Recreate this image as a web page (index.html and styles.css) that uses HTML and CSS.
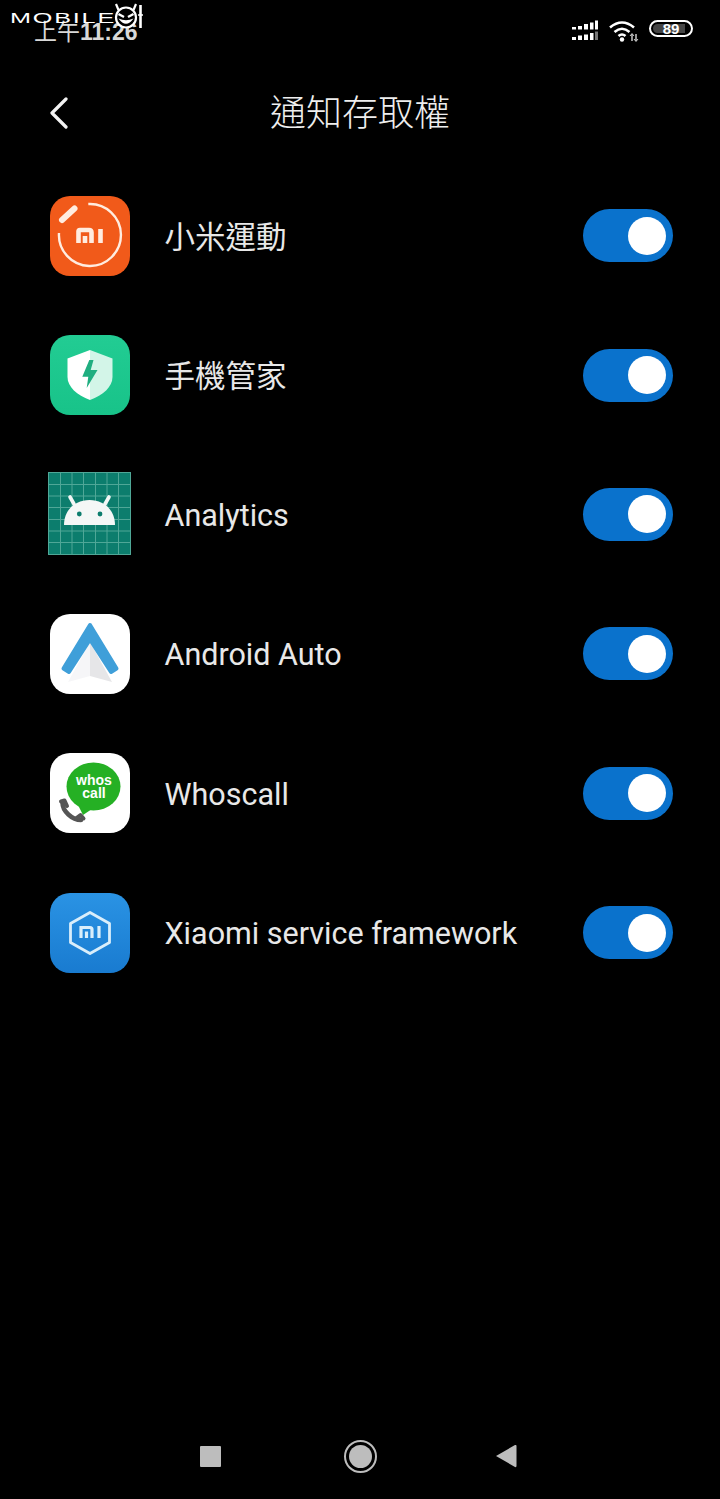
FILE: index.html
```html
<!DOCTYPE html>
<html lang="zh-Hant">

<head>
    <meta charset="UTF-8">
    <meta name="viewport" content="width=device-width, initial-scale=1.0">
    <title>通知存取權</title>
    <link rel="stylesheet" href="styles.css">
</head>

<body>

    <!-- Watermark over the status bar -->
    <div class="watermark">
        <span class="watermark-text">MOBILE</span>
        <svg class="watermark-logo" width="34" height="30" viewBox="0 0 34 30">
            <circle cx="13" cy="14.500" r="10" fill="#000" stroke="#fff" stroke-width="2.200"/>
            <path d="M5.500 7 L3 1 M20.500 7 L23 1" stroke="#fff" stroke-width="2.200" fill="none"/>
            <path d="M5.500 11 L11 14 M20.500 11 L15 14" stroke="#fff" stroke-width="2.400" fill="none"/>
            <path d="M5.500 15.500 Q13 26 20.500 15.500 Q13 19 5.500 15.500 Z" fill="#fff"/>
            <path d="M27.500 2 V25" stroke="#fff" stroke-width="2.600" fill="none"/>
            <path d="M25 12 H30" stroke="#fff" stroke-width="1.500" fill="none"/>
        </svg>
    </div>

    <div class="status-bar">
        <span class="status-time"><span class="status-ampm">上午</span>11:26</span>
        <div class="status-icons">
            <svg class="signal" width="28" height="22" viewBox="0 0 28 22">
                <path d="M1 7h4v2.500H1z M7 6h4v3.500H7z M13 4h4v5.500h-4z M19 2.500h3.500v7H19z M24 0.500h3v9h-3z" fill="#fff"/>
                <path d="M1 17h4v3H1z M7 15.500h4v4.500H7z M13 14.500h4v5.500h-4z M19 13h3.500v7H19z" fill="#fff"/>
                <path d="M24 11.500h3v8.500h-3z" fill="#777"/>
            </svg>
            <svg class="wifi" width="32" height="22" viewBox="0 0 32 22">
                <path d="M2 7.500 Q14 -2.500 26 7.500" stroke="#fff" stroke-width="2.600" fill="none"/>
                <path d="M6.500 12 Q14 5.500 21.500 12" stroke="#fff" stroke-width="2.600" fill="none"/>
                <path d="M10.500 16 Q14 13 17.500 16" stroke="#fff" stroke-width="2.600" fill="none"/>
                <circle cx="14" cy="19.500" r="2.200" fill="#fff"/>
                <path d="M24 14 V21 M28 14 V21" stroke="#ccc" stroke-width="1.500" fill="none"/>
                <path d="M22 16 L24 13.500 L26 16 M26 19 L28 21.500 L30 19" stroke="#ccc" stroke-width="1" fill="none"/>
            </svg>
            <div class="battery">
                <div class="battery-level">89</div>
            </div>
        </div>
    </div>

    <div class="header">
        <svg class="back" width="20" height="32" viewBox="0 0 20 32">
            <path d="M17 2 L3 16 L17 30" stroke="#f2f2f2" stroke-width="3.200" stroke-linecap="round" stroke-linejoin="round" fill="none"/>
        </svg>
        <h1>通知存取權</h1>
    </div>

    <div class="app-list">
        <div class="app-row">
            <svg class="app-icon" viewBox="0 0 80 80">
                <rect width="80" height="80" rx="20" fill="#f15a1a"/>
                <path d="M38.300 8 A31 31 0 1 1 9 37" stroke="#ffece0" stroke-width="2.400" fill="none"/>
                <path d="M12 24 L24.500 12.500" stroke="#ffece0" stroke-width="6" stroke-linecap="round"/>
                <path d="M28.500 47 V35.500 Q28.500 34 30 34 H39 Q41.500 34 41.500 36.500 V47 M35 40 V47 M50.500 33 V47" stroke="#ffece0" stroke-width="4.600" fill="none"/>
            </svg>
            <span class="app-name app-name-cjk">小米運動</span>
            <div class="switch"><div class="knob"></div></div>
        </div>

        <div class="app-row">
            <svg class="app-icon" viewBox="0 0 80 80">
                <defs>
                    <linearGradient id="guard" x1="0" y1="0" x2="0" y2="1">
                        <stop offset="0" stop-color="#22cc93"/>
                        <stop offset="1" stop-color="#18c389"/>
                    </linearGradient>
                </defs>
                <rect width="80" height="80" rx="20" fill="url(#guard)"/>
                <path d="M40 15 L62.500 23.500 V42 C62.500 52 53 60 40 65 Z" fill="#d3f5e8"/>
                <path d="M40 15 L17.500 23.500 V42 C17.500 52 27 60 40 65 Z" fill="#fff"/>
                <path d="M39.300 25 L32.300 41.700 H38.300 L36.700 53 L47.500 35 H40.700 L43.500 25 Z" fill="#1fae80"/>
            </svg>
            <span class="app-name app-name-cjk">手機管家</span>
            <div class="switch"><div class="knob"></div></div>
        </div>

        <div class="app-row">
            <svg class="app-icon app-icon-square" viewBox="0 0 83 83">
                <rect width="83" height="83" fill="#0c7d6d"/>
                <path d="M0.500 0 V83 M12.500 0 V83 M24 0 V83 M35.500 0 V83 M47.500 0 V83 M59 0 V83 M70.500 0 V83 M82.500 0 V83 M0 0.500 H83 M0 12.500 H83 M0 24 H83 M0 35.500 H83 M0 47.500 H83 M0 59 H83 M0 70.500 H83 M0 82.500 H83" stroke="#4fa797" stroke-width="1" fill="none"/>
                <path d="M16 53 C16 38 27 28 41.500 28 C56 28 67 38 67 53 Z" fill="#f4f7f6"/>
                <path d="M26 32 L22 25 M57 32 L61 25" stroke="#f4f7f6" stroke-width="3.600" stroke-linecap="round"/>
                <circle cx="31.300" cy="42" r="2.400" fill="#0c7d6d"/>
                <circle cx="52" cy="42" r="2.400" fill="#0c7d6d"/>
            </svg>
            <span class="app-name">Analytics</span>
            <div class="switch"><div class="knob"></div></div>
        </div>

        <div class="app-row">
            <svg class="app-icon" viewBox="0 0 80 80">
                <rect width="80" height="80" rx="20" fill="#fff"/>
                <path d="M40 28 L18 68 L40 62 Z" fill="#f6f6f8"/>
                <path d="M40 28 L62 68 L40 62 Z" fill="#e6e6e8"/>
                <path d="M40 11 L66.500 54.500 L61 58 L40 25.500 L19 58 L13.500 54.500 Z" fill="#3f9fd9" stroke="#3f9fd9" stroke-width="4" stroke-linejoin="round"/>
            </svg>
            <span class="app-name">Android Auto</span>
            <div class="switch"><div class="knob"></div></div>
        </div>

        <div class="app-row">
            <svg class="app-icon" viewBox="0 0 80 80">
                <rect width="80" height="80" rx="20" fill="#fff"/>
                <ellipse cx="43.500" cy="33.500" rx="27" ry="24" fill="#25b024"/>
                <path d="M26 48 L33 62 L42 56 Z" fill="#25b024"/>
                <text class="whos-text" x="44" y="32">whos</text>
                <text class="whos-text" x="44" y="45">call</text>
                <path d="M12.500 50 C12.500 58 22 67 31 67" stroke="#555" stroke-width="4.500" stroke-linecap="round" fill="none"/>
                <path d="M11 48.500 L14.500 47.500 L17 53 M26.500 65 L30.500 62 L33.500 65.500" stroke="#555" stroke-width="4" stroke-linecap="round" stroke-linejoin="round" fill="none"/>
            </svg>
            <span class="app-name">Whoscall</span>
            <div class="switch"><div class="knob"></div></div>
        </div>

        <div class="app-row">
            <svg class="app-icon" viewBox="0 0 80 80">
                <defs>
                    <linearGradient id="service" x1="0" y1="0" x2="0" y2="1">
                        <stop offset="0" stop-color="#2a93e4"/>
                        <stop offset="1" stop-color="#197bd0"/>
                    </linearGradient>
                </defs>
                <rect width="80" height="80" rx="20" fill="url(#service)"/>
                <path d="M40 19.500 L59.500 30.500 V49.500 L40 60.500 L20.500 49.500 V30.500 Z" stroke="#d9eefb" stroke-width="2.800" stroke-linejoin="round" fill="none"/>
                <path d="M31 45 V34.500 H40 Q42 34.500 42 36.500 V45 M36.500 38.500 V45 M49 33 V45" stroke="#d9eefb" stroke-width="3.200" fill="none"/>
            </svg>
            <span class="app-name">Xiaomi service framework</span>
            <div class="switch"><div class="knob"></div></div>
        </div>
    </div>

    <!-- Navigation keys -->
    <div class="nav-bar">
        <div class="nav-square"></div>
        <div class="nav-home"><div class="nav-home-dot"></div></div>
        <svg class="nav-back" width="22" height="26" viewBox="0 0 22 26">
            <path d="M1 13 L20 2 Q21.500 1.500 21.500 3 V23 Q21.500 24.500 20 24 Z" fill="#bdbdbd"/>
        </svg>
    </div>

</body>

</html>
```

FILE: styles.css
```css
* {
    margin: 0;
    padding: 0;
    box-sizing: border-box;
}

body {
    position: relative;
    display: flex;
    flex-direction: column;
    height: 1499px;
    overflow: hidden;
    background-color: #000;
    color: #e8e8e8;
    font-family: 'Roboto', 'Noto Sans CJK TC', sans-serif;
}

.watermark {
    position: absolute;
    top: 3px;
    left: 10px;
    display: flex;
    align-items: flex-start;
    z-index: 2;
}

.watermark-text {
    display: block;
    width: 103px;
    margin-top: 8px;
    font-family: 'Liberation Sans', sans-serif;
    font-size: 14px;
    line-height: 15px;
    letter-spacing: 1px;
    color: #fff;
    transform: scaleX(1.8);
    transform-origin: left center;
}

.status-bar {
    display: flex;
    justify-content: space-between;
    align-items: center;
    height: 60px;
    padding: 0 27px 0 34px;
}

.status-time {
    font-family: 'Liberation Sans', 'Noto Sans CJK TC', sans-serif;
    font-size: 23px;
    font-weight: 700;
    color: #d8d8d8;
}

.status-ampm {
    font-weight: 400;
}

.status-icons {
    display: flex;
    align-items: center;
    gap: 9px;
    margin-top: -3px;
}

.signal,
.wifi {
    margin-top: 4px;
}

.battery {
    width: 44px;
    height: 17px;
    padding: 2px;
    border: 2px solid #fff;
    border-radius: 9px;
}

.battery-level {
    width: 89%;
    height: 100%;
    padding-left: 4px;
    border-radius: 5px 0 0 5px;
    background-color: #444;
    font-family: 'Liberation Sans', sans-serif;
    font-size: 15px;
    font-weight: 700;
    line-height: 9px;
    text-align: center;
    color: #fff;
}

.header {
    position: relative;
    display: flex;
    justify-content: center;
    align-items: center;
    height: 106px;
    padding-bottom: 6px;
}

.header h1 {
    font-size: 36px;
    font-weight: 300;
    color: #eee;
}

.back {
    position: absolute;
    left: 49px;
    top: 37px;
}

.app-row {
    display: flex;
    align-items: center;
    height: 139.4px;
    padding: 0 47px 0 50px;
}

.app-icon {
    flex-shrink: 0;
    width: 80px;
    height: 80px;
}

.app-icon-square {
    width: 83px;
    height: 83px;
    margin: -2px -1px 0 -2px;
}

.app-name {
    margin-left: 34.5px;
    padding-top: 2px;
    font-size: 30.5px;
}

.app-name-cjk {
    padding-top: 0;
    padding-bottom: 2px;
}

.whos-text {
    font-family: 'Liberation Sans', sans-serif;
    font-size: 14px;
    font-weight: 700;
    text-anchor: middle;
    fill: #fff;
}

.switch {
    display: flex;
    justify-content: flex-end;
    align-items: center;
    width: 90px;
    height: 53px;
    margin-left: auto;
    padding-right: 7px;
    border-radius: 27px;
    background-color: #0a72cc;
}

.knob {
    width: 38px;
    height: 38px;
    border-radius: 50%;
    background-color: #fff;
}

.nav-bar {
    display: flex;
    align-items: center;
    gap: 123px;
    height: 86px;
    margin-top: auto;
    padding: 0 0 0 200px;
}

.nav-bar > * {
    flex-shrink: 0;
}

.nav-square {
    width: 21px;
    height: 21px;
    border-radius: 1px;
    background-color: #bdbdbd;
}

.nav-home {
    display: flex;
    justify-content: center;
    align-items: center;
    width: 33px;
    height: 33px;
    border: 2px solid #bdbdbd;
    border-radius: 50%;
}

.nav-home-dot {
    width: 23px;
    height: 23px;
    border-radius: 50%;
    background-color: #bdbdbd;
}

.nav-back {
    margin-left: -5px;
}
```
